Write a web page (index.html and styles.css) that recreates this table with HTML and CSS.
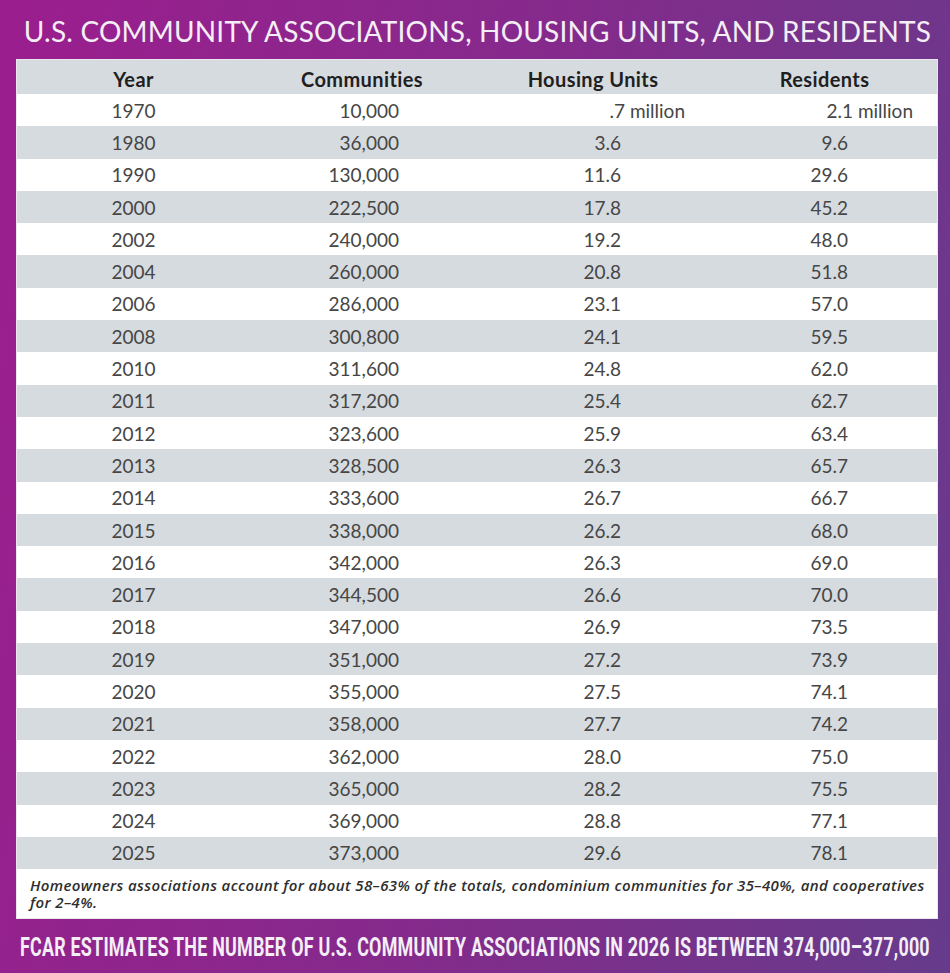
FILE: index.html
```html
<!DOCTYPE html>
<html lang="en">
<head>
<meta charset="UTF-8">
<meta name="viewport" content="width=device-width, initial-scale=1.0">
<title>U.S. Community Associations</title>
<link rel="stylesheet" href="styles.css">
</head>
<body>

<div class="panel">
  <h1 class="title">U.S. COMMUNITY ASSOCIATIONS, HOUSING UNITS, AND RESIDENTS</h1>

  <div class="data-table">
    <div class="row head">
      <div class="cell year">Year</div>
      <div class="cell comm">Communities</div>
      <div class="cell units">Housing Units</div>
      <div class="cell res">Residents</div>
    </div>
    <div class="row">
      <div class="cell year">1970</div>
      <div class="cell comm">10,000</div>
      <div class="cell units">.7<span class="unit"> million</span></div>
      <div class="cell res">2.1<span class="unit"> million</span></div>
    </div>
    <div class="row"><div class="cell year">1980</div><div class="cell comm">36,000</div><div class="cell units">3.6</div><div class="cell res">9.6</div></div>
    <div class="row"><div class="cell year">1990</div><div class="cell comm">130,000</div><div class="cell units">11.6</div><div class="cell res">29.6</div></div>
    <div class="row"><div class="cell year">2000</div><div class="cell comm">222,500</div><div class="cell units">17.8</div><div class="cell res">45.2</div></div>
    <div class="row"><div class="cell year">2002</div><div class="cell comm">240,000</div><div class="cell units">19.2</div><div class="cell res">48.0</div></div>
    <div class="row"><div class="cell year">2004</div><div class="cell comm">260,000</div><div class="cell units">20.8</div><div class="cell res">51.8</div></div>
    <div class="row"><div class="cell year">2006</div><div class="cell comm">286,000</div><div class="cell units">23.1</div><div class="cell res">57.0</div></div>
    <div class="row"><div class="cell year">2008</div><div class="cell comm">300,800</div><div class="cell units">24.1</div><div class="cell res">59.5</div></div>
    <div class="row"><div class="cell year">2010</div><div class="cell comm">311,600</div><div class="cell units">24.8</div><div class="cell res">62.0</div></div>
    <div class="row"><div class="cell year">2011</div><div class="cell comm">317,200</div><div class="cell units">25.4</div><div class="cell res">62.7</div></div>
    <div class="row"><div class="cell year">2012</div><div class="cell comm">323,600</div><div class="cell units">25.9</div><div class="cell res">63.4</div></div>
    <div class="row"><div class="cell year">2013</div><div class="cell comm">328,500</div><div class="cell units">26.3</div><div class="cell res">65.7</div></div>
    <div class="row"><div class="cell year">2014</div><div class="cell comm">333,600</div><div class="cell units">26.7</div><div class="cell res">66.7</div></div>
    <div class="row"><div class="cell year">2015</div><div class="cell comm">338,000</div><div class="cell units">26.2</div><div class="cell res">68.0</div></div>
    <div class="row"><div class="cell year">2016</div><div class="cell comm">342,000</div><div class="cell units">26.3</div><div class="cell res">69.0</div></div>
    <div class="row"><div class="cell year">2017</div><div class="cell comm">344,500</div><div class="cell units">26.6</div><div class="cell res">70.0</div></div>
    <div class="row"><div class="cell year">2018</div><div class="cell comm">347,000</div><div class="cell units">26.9</div><div class="cell res">73.5</div></div>
    <div class="row"><div class="cell year">2019</div><div class="cell comm">351,000</div><div class="cell units">27.2</div><div class="cell res">73.9</div></div>
    <div class="row"><div class="cell year">2020</div><div class="cell comm">355,000</div><div class="cell units">27.5</div><div class="cell res">74.1</div></div>
    <div class="row"><div class="cell year">2021</div><div class="cell comm">358,000</div><div class="cell units">27.7</div><div class="cell res">74.2</div></div>
    <div class="row"><div class="cell year">2022</div><div class="cell comm">362,000</div><div class="cell units">28.0</div><div class="cell res">75.0</div></div>
    <div class="row"><div class="cell year">2023</div><div class="cell comm">365,000</div><div class="cell units">28.2</div><div class="cell res">75.5</div></div>
    <div class="row"><div class="cell year">2024</div><div class="cell comm">369,000</div><div class="cell units">28.8</div><div class="cell res">77.1</div></div>
    <div class="row"><div class="cell year">2025</div><div class="cell comm">373,000</div><div class="cell units">29.6</div><div class="cell res">78.1</div></div>

    <p class="note">Homeowners associations account for about 58&ndash;63% of the totals, condominium communities for 35&ndash;40%, and cooperatives for 2&ndash;4%.</p>
  </div>

  <p class="estimate"><span class="estimate-text">FCAR ESTIMATES THE NUMBER OF U.S. COMMUNITY ASSOCIATIONS IN 2026 IS BETWEEN 374,000&ndash;377,000</span></p>
</div>

</body>
</html>
```

FILE: styles.css
```css
/* purple poster with the data table */
body {
  margin: 0;
  padding: 0;
  font-family: Lato, "Open Sans", sans-serif;
}
.panel {
  width: 950px;
  height: 973px;
  box-sizing: border-box;
  padding: 0 12px 0 16px;
  background: linear-gradient(100deg, #9b1e8e 0%, #852a8c 50%, #663b8b 100%);
  display: flex;
  flex-direction: column;
  overflow: hidden;
}
.title {
  margin: 0 0 0 1px;
  height: 59px;
  display: flex;
  align-items: center;
  justify-content: center;
  padding-top: 2px;
  box-sizing: border-box;
  font-size: 28px;
  font-weight: normal;
  color: #f4eef6;
  letter-spacing: 0.2px;
  white-space: nowrap;
}
.data-table {
  background-color: #fff;
  border: 1px solid #ebe6ee;
  box-sizing: border-box;
  width: 922px;
  height: 860px;
}
.row {
  display: grid;
  grid-template-columns: 233px 224px 238px 225px;
  height: 32.3px;
  align-items: center;
  font-size: 19px;
  color: #464646;
}
.row:nth-child(odd) {
  background-color: #d6dbdf;
}
.row.head {
  height: 34px;
  padding-top: 3px;
  box-sizing: border-box;
  font-size: 20px;
  letter-spacing: 0.4px;
  font-weight: bold;
  color: #1f1f1f;
}
.cell {
  white-space: nowrap;
}
.cell.year {
  text-align: center;
}
.cell.comm {
  text-align: right;
  padding-right: 75px;
}
.cell.units {
  text-align: right;
  padding-right: 91px;
}
.cell.res {
  text-align: right;
  padding-right: 89px;
}
.head .cell {
  text-align: center;
  padding-right: 0;
}
.unit {
  margin-right: -64px;
}
.res .unit {
  margin-right: -65px;
}
.note {
  margin: 0;
  padding: 8px 6px 0 13px;
  font-family: "Open Sans", Lato, sans-serif;
  font-size: 15px;
  line-height: 17px;
  letter-spacing: 0.39px;
  font-style: italic;
  font-weight: 600;
  color: #2e2e2e;
}
.estimate {
  margin: 0;
  flex: 1;
  display: flex;
  align-items: center;
  padding-left: 4px;
  padding-top: 2px;
}
.estimate-text {
  display: inline-block;
  font-family: Roboto, "DejaVu Sans", sans-serif;
  font-weight: bold;
  font-size: 25px;
  letter-spacing: 0.3px;
  color: #f4eef6;
  white-space: nowrap;
  transform: scaleX(0.716);
  transform-origin: left center;
}
```
